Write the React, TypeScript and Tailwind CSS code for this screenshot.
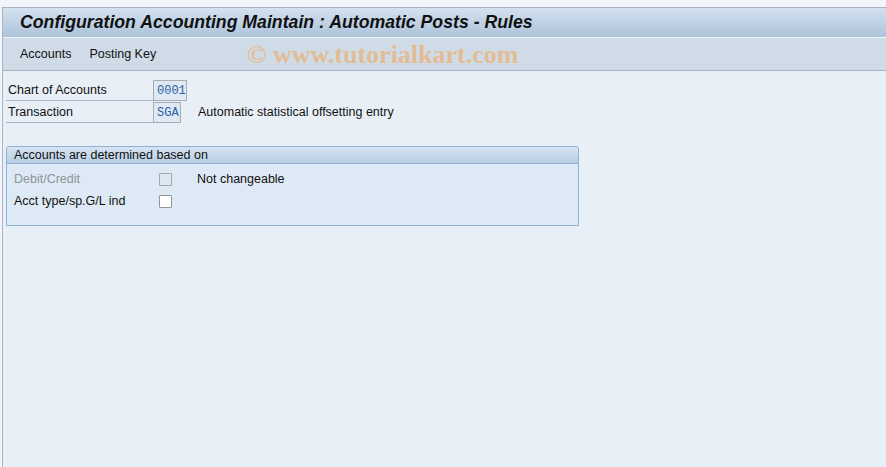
import React from "react";

export default function App() {
  const font = { fontFamily: '"Liberation Sans", Arial, sans-serif' };
  return (
    <div className="w-[886px] h-[467px] bg-[#f2f6fa] overflow-hidden relative" style={font}>
      <div className="absolute left-[2px] right-0 top-[7px] bottom-0 border-l border-t border-[#a9b4c4] bg-[#e8eff7] flex flex-col">
        <div className="h-[30px] bg-gradient-to-b from-[#d4e1ef] to-[#adc3da] flex items-center pl-[17px] border-b border-[#eef3f8]">
          <span className="text-[17.7px] font-bold italic text-[#111]">
            Configuration Accounting Maintain : Automatic Posts - Rules
          </span>
        </div>
        <div className="h-[33px] bg-[#cfdce7] border-b border-[#a8b4c4] flex items-center pl-[17px] relative text-[12.5px] text-[#111]">
          <span>Accounts</span>
          <span className="ml-[18px]">Posting Key</span>
          <span
            className="absolute left-[244px] top-[-3px] text-[26px] font-bold text-[#e6b98c] opacity-90"
            style={{ fontFamily: '"Liberation Serif", "Times New Roman", serif' }}
          >
            © www.tutorialkart.com
          </span>
        </div>
        <div className="pl-[3px] pt-[9px] text-[12.5px] text-[#111]">
          <div className="flex items-center h-[21px]">
            <div className="w-[147px] h-[21px] border-b border-[#aab6c4] flex items-end pb-[0px] pl-[2px]">Chart of Accounts</div>
            <div className="w-[34px] h-[21px] border border-[#a6adb5] bg-[#dfe9f3] text-[#2b5fa8] flex items-center pl-[3px] text-[12px]" style={{ fontFamily: '"Liberation Mono", "Courier New", monospace' }}>0001</div>
          </div>
          <div className="flex items-center h-[21px] mt-[1px]">
            <div className="w-[147px] h-[21px] border-b border-[#aab6c4] flex items-end pb-[0px] pl-[2px]">Transaction</div>
            <div className="w-[28px] h-[21px] border border-[#a6adb5] bg-[#dfe9f3] text-[#2b5fa8] flex items-center pl-[3px] text-[12px]" style={{ fontFamily: '"Liberation Mono", "Courier New", monospace' }}>SGA</div>
            <span className="ml-[17px]">Automatic statistical offsetting entry</span>
          </div>
          <div className="mt-[23px] w-[573px] h-[80px] border border-[#8fb1d4] rounded-t-[3px] bg-[#dde9f4] flex flex-col">
            <div className="h-[17px] bg-gradient-to-b from-[#d6e4f2] to-[#b8cee4] border-b border-[#8fb1d4] flex items-center pl-[7px] rounded-t-[3px]">
              Accounts are determined based on
            </div>
            <div className="flex items-center h-[22px] mt-[4px] pl-[7px]">
              <span className="w-[145px] text-[#8d949c]">Debit/Credit</span>
              <span className="w-[13px] h-[13px] border border-[#a3a8ad] bg-[#dde8f3] rounded-[1px]"></span>
              <span className="ml-[25px]">Not changeable</span>
            </div>
            <div className="flex items-center h-[22px] pl-[7px]">
              <span className="w-[145px]">Acct type/sp.G/L ind</span>
              <span className="w-[13px] h-[13px] border border-[#8e949a] bg-white rounded-[1px]"></span>
            </div>
          </div>
        </div>
      </div>
    </div>
  );
}
